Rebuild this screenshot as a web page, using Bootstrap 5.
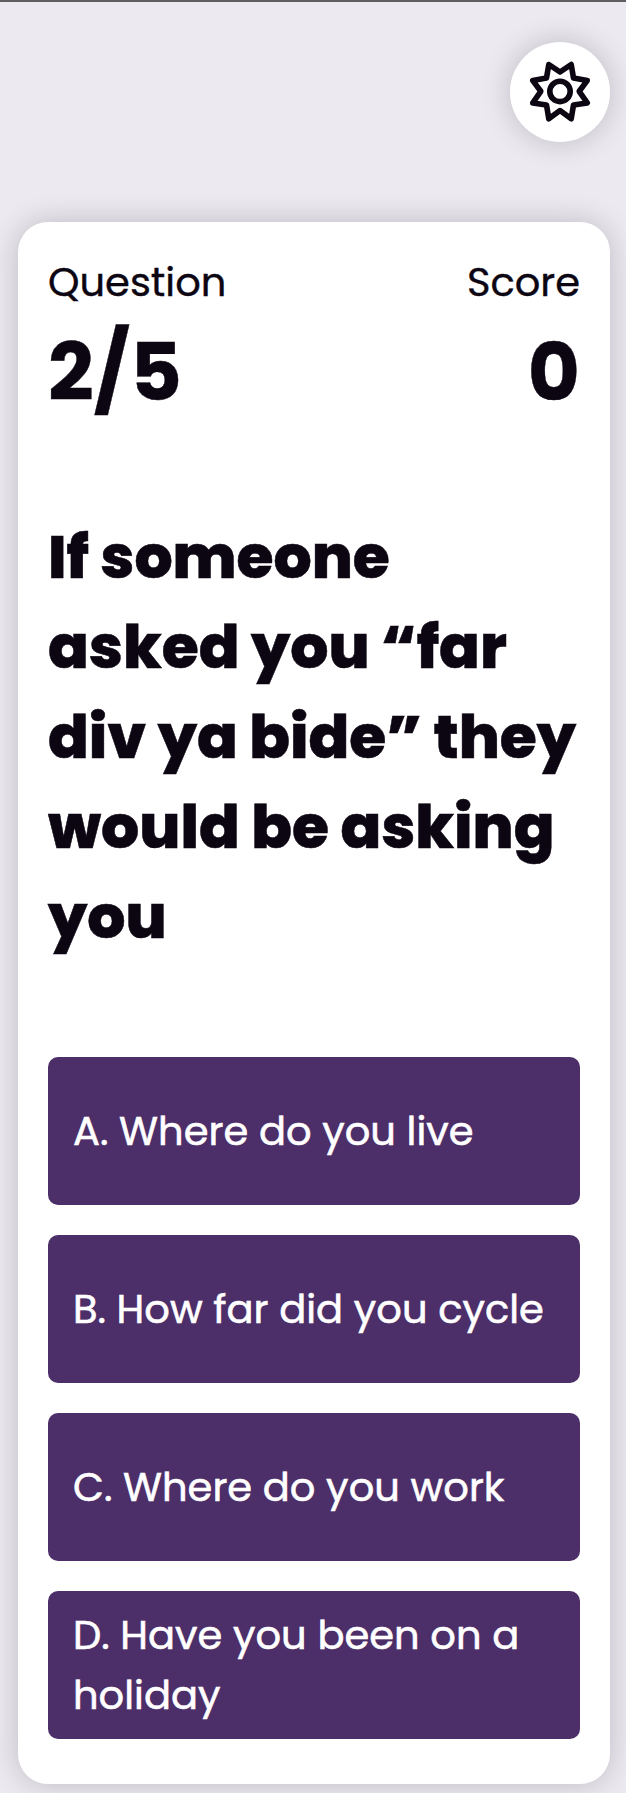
<!DOCTYPE html>
<html lang="en">
<head>
<meta charset="utf-8">
<meta name="viewport" content="width=device-width, initial-scale=1">
<title>Quiz</title>
<link href="https://cdn.jsdelivr.net/npm/bootstrap@5.3.0/dist/css/bootstrap.min.css" rel="stylesheet">
<style>
  body {
    font-family: Poppins, Inter, "Liberation Sans", sans-serif;
    background: #ece9f0;
    color: #0c0512;
    border-top: 2px solid #5e5d60;
    overflow: hidden;
  }
  .page { padding: 40px 16px 9px 18px; }
  .settings {
    width: 100px; height: 100px;
    background: #fff; color: #0c0512;
    box-shadow: 0 0 30px rgba(12, 5, 18, .2);
  }
  .settings:hover { background: #fff; }
  .quiz {
    margin-top: 80px;
    padding: 30px 30px 45px;
    border-radius: 30px;
    color: inherit;
    box-shadow: 0 0 30px rgba(12, 5, 18, .2);
  }
  .stat-label { font-size: 40px; line-height: 60px; -webkit-text-stroke: .4px; }
  .stat-value { font-size: 80px; line-height: 120px; -webkit-text-stroke: .4px; }
  .prompt {
    margin: 80px 0 95px;
    font-size: 60px; font-weight: 800; line-height: 90px;
    -webkit-text-stroke: .5px;
  }
  .answers { gap: 30px; }
  .answer {
    height: 148px;
    padding: 0 25px;
    border-radius: 10px;
    background: #4c2e69; color: #fff;
    font-size: 40px; font-weight: 400; line-height: 60px;
    -webkit-text-stroke: .6px;
  }
  .answer:hover { background: #5a397a; color: #fff; }
</style>
</head>
<body>
<main class="page">
  <div class="d-flex justify-content-end">
    <button class="settings btn border-0 rounded-circle p-0 d-flex align-items-center justify-content-center" aria-label="Settings">
      <svg width="70" height="70" viewBox="-35 -35 70 70" fill="none" stroke="currentColor" stroke-width="5.6" stroke-linejoin="round">
        <path d="M0-20 11.2-27.5 13.5-14 27.2-11.4 19.2-.7 27.2 10.9 13.5 13 11.2 26.8 0 18.6-11.2 26.8-13.5 13-27.2 10.9-19.2-.7-27.2-11.4-13.5-14-11.2-27.5Z"/>
        <circle cy="-.6" r="10.2"/>
      </svg>
    </button>
  </div>

  <section class="quiz card border-0">
    <div class="d-flex justify-content-between">
      <div>
        <div class="stat-label">Question</div>
        <div class="stat-value fw-bold">2/5</div>
      </div>
      <div class="text-end">
        <div class="stat-label">Score</div>
        <div class="stat-value fw-bold">0</div>
      </div>
    </div>

    <h1 class="prompt">If someone asked you “far div ya bide” they would be asking you</h1>

    <div class="answers d-flex flex-column">
      <button class="answer btn border-0 text-start">A. Where do you live</button>
      <button class="answer btn border-0 text-start">B. How far did you cycle</button>
      <button class="answer btn border-0 text-start">C. Where do you work</button>
      <button class="answer btn border-0 text-start">D. Have you been on a holiday</button>
    </div>
  </section>
</main>
<script src="https://cdn.jsdelivr.net/npm/bootstrap@5.3.0/dist/js/bootstrap.bundle.min.js"></script>
</body>
</html>
